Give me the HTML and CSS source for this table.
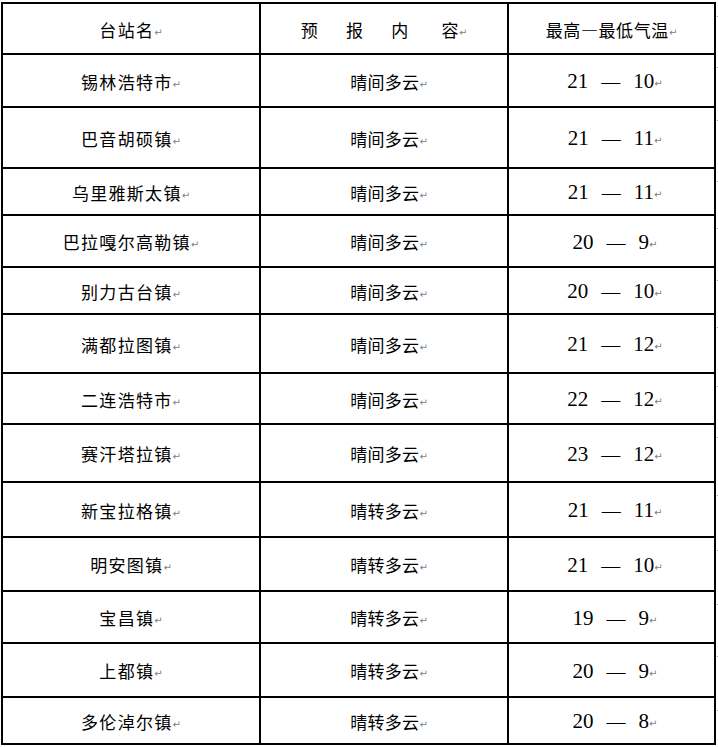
FILE: index.html
```html
<!DOCTYPE html>
<html lang="zh-CN">
<head>
<meta charset="utf-8">
<title>天气预报</title>
<link rel="stylesheet" href="styles.css">
</head>
<body>
<div class="grid">
  <div class="cell c1 head"><span class="txt">台站名<i class="pm">↵</i></span></div>
  <div class="cell c2 head"><span class="txt"><span class="sp">预</span><span class="sp s2">报</span><span class="sp s3">内</span><span class="sp s4">容</span><i class="pm">↵</i></span></div>
  <div class="cell c3 head"><span class="txt">最高—最低气温<i class="pm">↵</i></span></div>

  <div class="cell c1"><span class="txt">锡林浩特市<i class="pm">↵</i></span></div>
  <div class="cell c2"><span class="txt">晴间多云<i class="pm">↵</i></span></div>
  <div class="cell c3"><span class="txt"><span class="n">21</span><span class="dash">—</span><span class="n">10</span><i class="pm">↵</i></span></div>

  <div class="cell c1"><span class="txt">巴音胡硕镇<i class="pm">↵</i></span></div>
  <div class="cell c2"><span class="txt">晴间多云<i class="pm">↵</i></span></div>
  <div class="cell c3"><span class="txt"><span class="n">21</span><span class="dash">—</span><span class="n">11</span><i class="pm">↵</i></span></div>

  <div class="cell c1"><span class="txt">乌里雅斯太镇<i class="pm">↵</i></span></div>
  <div class="cell c2"><span class="txt">晴间多云<i class="pm">↵</i></span></div>
  <div class="cell c3"><span class="txt"><span class="n">21</span><span class="dash">—</span><span class="n">11</span><i class="pm">↵</i></span></div>

  <div class="cell c1"><span class="txt">巴拉嘎尔高勒镇<i class="pm">↵</i></span></div>
  <div class="cell c2"><span class="txt">晴间多云<i class="pm">↵</i></span></div>
  <div class="cell c3"><span class="txt"><span class="n">20</span><span class="dash">—</span><span class="n">9</span><i class="pm">↵</i></span></div>

  <div class="cell c1"><span class="txt">别力古台镇<i class="pm">↵</i></span></div>
  <div class="cell c2"><span class="txt">晴间多云<i class="pm">↵</i></span></div>
  <div class="cell c3"><span class="txt"><span class="n">20</span><span class="dash">—</span><span class="n">10</span><i class="pm">↵</i></span></div>

  <div class="cell c1"><span class="txt">满都拉图镇<i class="pm">↵</i></span></div>
  <div class="cell c2"><span class="txt">晴间多云<i class="pm">↵</i></span></div>
  <div class="cell c3"><span class="txt"><span class="n">21</span><span class="dash">—</span><span class="n">12</span><i class="pm">↵</i></span></div>

  <div class="cell c1"><span class="txt">二连浩特市<i class="pm">↵</i></span></div>
  <div class="cell c2"><span class="txt">晴间多云<i class="pm">↵</i></span></div>
  <div class="cell c3"><span class="txt"><span class="n">22</span><span class="dash">—</span><span class="n">12</span><i class="pm">↵</i></span></div>

  <div class="cell c1"><span class="txt">赛汗塔拉镇<i class="pm">↵</i></span></div>
  <div class="cell c2"><span class="txt">晴间多云<i class="pm">↵</i></span></div>
  <div class="cell c3"><span class="txt"><span class="n">23</span><span class="dash">—</span><span class="n">12</span><i class="pm">↵</i></span></div>

  <div class="cell c1"><span class="txt">新宝拉格镇<i class="pm">↵</i></span></div>
  <div class="cell c2"><span class="txt">晴转多云<i class="pm">↵</i></span></div>
  <div class="cell c3"><span class="txt"><span class="n">21</span><span class="dash">—</span><span class="n">11</span><i class="pm">↵</i></span></div>

  <div class="cell c1"><span class="txt">明安图镇<i class="pm">↵</i></span></div>
  <div class="cell c2"><span class="txt">晴转多云<i class="pm">↵</i></span></div>
  <div class="cell c3"><span class="txt"><span class="n">21</span><span class="dash">—</span><span class="n">10</span><i class="pm">↵</i></span></div>

  <div class="cell c1"><span class="txt">宝昌镇<i class="pm">↵</i></span></div>
  <div class="cell c2"><span class="txt">晴转多云<i class="pm">↵</i></span></div>
  <div class="cell c3"><span class="txt"><span class="n">19</span><span class="dash">—</span><span class="n">9</span><i class="pm">↵</i></span></div>

  <div class="cell c1"><span class="txt">上都镇<i class="pm">↵</i></span></div>
  <div class="cell c2"><span class="txt">晴转多云<i class="pm">↵</i></span></div>
  <div class="cell c3"><span class="txt"><span class="n">20</span><span class="dash">—</span><span class="n">9</span><i class="pm">↵</i></span></div>

  <div class="cell c1"><span class="txt">多伦淖尔镇<i class="pm">↵</i></span></div>
  <div class="cell c2"><span class="txt">晴转多云<i class="pm">↵</i></span></div>
  <div class="cell c3"><span class="txt"><span class="n">20</span><span class="dash">—</span><span class="n">8</span><i class="pm">↵</i></span></div>
</div>
</body>
</html>
```

FILE: styles.css
```css
html, body {
  margin: 0;
  padding: 0;
  background: #ffffff;
}

body {
  font-family: "Noto Sans CJK SC", sans-serif;
  color: #000000;
}

.grid {
  display: grid;
  grid-template-columns: 256px 246px 205px;
  grid-template-rows: 49px 51px 59px 45px 50px 45px 57px 49px 56px 53px 52px 50px 52px 45px;
  gap: 2px;
  padding: 2px;
  background: #000000;
  width: max-content;
  margin: 2px 0 0 1px;
}

.cell {
  background: #ffffff;
  display: flex;
  align-items: center;
  justify-content: center;
  position: relative;
}

.txt {
  white-space: nowrap;
  line-height: 1;
  display: inline-flex;
  align-items: baseline;
}

.c1 .txt {
  font-size: 17px;
  letter-spacing: 1.3px;
  font-weight: 400;
  padding-top: 2px;
}

.c2 {
  padding-left: 10px;
}

.c2 .txt {
  font-size: 17px;
  letter-spacing: 0.3px;
  font-weight: 400;
  padding-top: 2px;
}

.c2.head {
  padding-left: 0;
}

.c2.head .sp {
  display: inline-block;
}

.c2.head .s2,
.c2.head .s3 {
  margin-left: 28px;
}

.c2.head .s4 {
  margin-left: 33px;
}

.c3 {
  padding-left: 7px;
}

.c3.head {
  padding-left: 0;
}

.c3 .txt {
  font-size: 17px;
  letter-spacing: 0.6px;
  font-weight: 400;
  padding-top: 2px;
}

.c3 .n,
.c3 .dash {
  font-family: "Liberation Serif", serif;
  font-size: 21px;
  letter-spacing: 0;
}

.c3 .dash {
  font-size: 19px;
  margin: 0 13px;
}

.pm {
  font-family: "DejaVu Sans", sans-serif;
  font-style: normal;
  font-size: 10px;
  color: #808080;
  letter-spacing: 0;
  position: relative;
  top: -1px;
}

.c3::after {
  content: "";
  position: absolute;
  right: -4px;
  top: 12px;
  width: 1px;
  height: 1px;
  background: #9a9a9a;
}
```
